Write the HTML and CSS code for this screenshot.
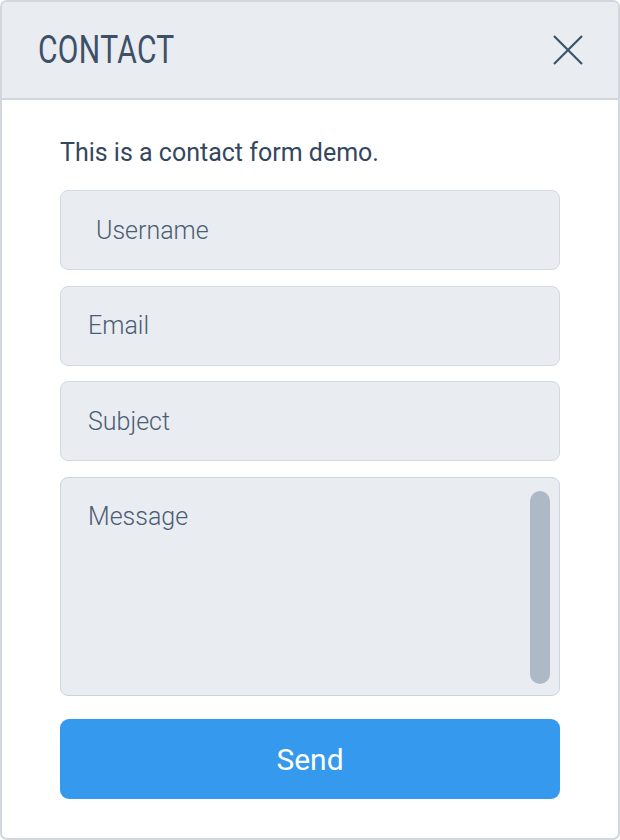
FILE: index.html
```html
<!DOCTYPE html>
<html>
<head>
<meta charset="utf-8">
<link rel="stylesheet" href="styles.css">
</head>
<body>
<div class="card">
  <div class="header">
    <h1 class="title">CONTACT</h1>
    <button class="close" aria-label="Close">
      <svg width="32" height="32" viewBox="0 0 32 32"><path d="M2 2 L30 30 M30 2 L2 30" stroke="#3e5269" stroke-width="2.2" fill="none"/></svg>
    </button>
  </div>
  <div class="content">
    <p class="intro">This is a contact form demo.</p>
    <div class="field field-user">Username</div>
    <div class="field">Email</div>
    <div class="field">Subject</div>
    <div class="field message">
      <span class="msg-text">Message</span>
      <span class="thumb"></span>
    </div>
    <button class="send">Send</button>
  </div>
</div>
</body>
</html>
```

FILE: styles.css
```css
* { box-sizing: border-box; }
html, body { margin: 0; padding: 0; background: #ffffff; }
body { font-family: Roboto, "Noto Sans", sans-serif; }
.card {
  width: 620px;
  height: 840px;
  border: 2px solid #d2d6dd;
  border-radius: 7px;
  overflow: hidden;
  background: #ffffff;
}
.header {
  height: 98px;
  background: #e9ecf1;
  border-bottom: 2px solid #d2d6dd;
  display: flex;
  align-items: center;
  justify-content: space-between;
  padding: 0 34px 0 36px;
}
.title {
  margin: 0;
  font-weight: 400;
  font-size: 38px;
  color: #3d5068;
  letter-spacing: 0.4px;
  transform: scaleX(0.79);
  transform-origin: left center;
}
.close {
  border: 0;
  background: transparent;
  padding: 0;
  width: 32px;
  height: 32px;
  display: flex;
}
.content {
  padding: 38px 58px 0 58px;
  display: flex;
  flex-direction: column;
}
.intro {
  margin: 0 0 22px 0;
  font-size: 25px;
  line-height: 30px;
  color: #34475e;
}
.field {
  height: 80px;
  background: #e9ecf1;
  border: 1.5px solid #d3d9e2;
  border-radius: 8px;
  margin-bottom: 15.7px;
  display: flex;
  align-items: center;
  padding-left: 27px;
  font-size: 25px;
  color: #4b5d74;
  font-weight: 300;
}
.field-user { padding-left: 35px; }
.message {
  height: 219px;
  align-items: stretch;
  padding: 0 9px 0 27px;
  border-color: #cbd4e0;
  margin-bottom: 23px;
}
.msg-text {
  flex: 1;
  padding-top: 24px;
  line-height: 30px;
}
.thumb {
  width: 20px;
  margin: 13px 0 11px 0;
  background: #aeb9c8;
  border-radius: 10px;
}
.send {
  height: 80px;
  border: 0;
  border-radius: 9px;
  background: #3599ee;
  color: #ffffff;
  font-family: Roboto, sans-serif;
  font-size: 30px;
  font-weight: 400;
}
```
